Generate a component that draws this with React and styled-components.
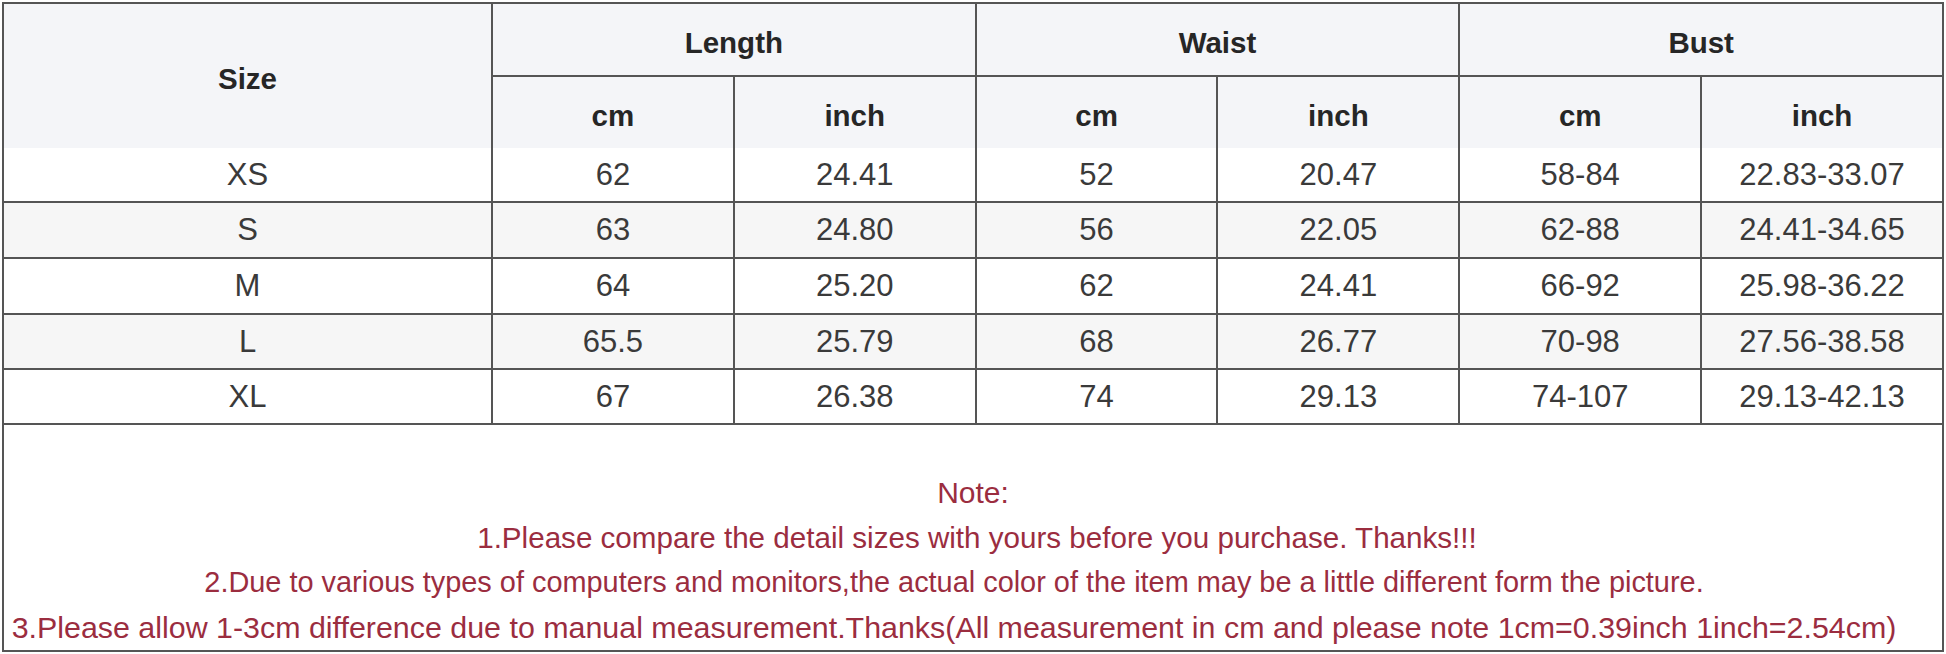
import React from "react";
import styled, { createGlobalStyle } from "styled-components";

const Global = createGlobalStyle`
  html, body { margin: 0; padding: 0; background: #ffffff; }
  body { font-family: "Liberation Sans", Arial, sans-serif; }
`;

const Page = styled.div`
  padding: 2px 2px 0 2px;
  width: 1946px;
  box-sizing: border-box;
`;

const Table = styled.table`
  width: 1942px;
  border-collapse: collapse;
  table-layout: fixed;
  border: 2px solid #555;
`;

const HeadCell = styled.th`
  background: #f4f5f8;
  color: #262626;
  font-weight: bold;
  font-size: 29.5px;
  text-align: center;
  vertical-align: middle;
  height: ${(p) => p.$h}px;
  padding: 6px 0 0 0;
  border-left: 2px solid #555;
  border-right: 2px solid #555;
  border-bottom: ${(p) => (p.$line ? "2px solid #555" : "none")};
  box-sizing: border-box;
`;

const Row = styled.tr`
  background: ${(p) => (p.$striped ? "#f6f6f6" : "#ffffff")};
`;

const Cell = styled.td`
  color: #3a3a3a;
  font-size: 31px;
  text-align: center;
  vertical-align: middle;
  height: ${(p) => p.$h}px;
  padding: 0;
  border: 2px solid #555;
  border-top: ${(p) => (p.$first ? "none" : "2px solid #555")};
  box-sizing: border-box;
`;

const NoteCell = styled.td`
  height: 227px;
  padding: 46px 0 0 0;
  border: 2px solid #555;
  vertical-align: top;
  box-sizing: border-box;
`;

const NoteLine = styled.div`
  color: #9b2d3f;
  font-size: ${(p) => p.$size}px;
  line-height: 44.5px;
  text-align: center;
  white-space: nowrap;
  padding-right: ${(p) => Math.max(0, p.$shift)}px;
  padding-left: ${(p) => Math.max(0, -p.$shift)}px;
`;

const rows = [
  ["XS", "62", "24.41", "52", "20.47", "58-84", "22.83-33.07"],
  ["S", "63", "24.80", "56", "22.05", "62-88", "24.41-34.65"],
  ["M", "64", "25.20", "62", "24.41", "66-92", "25.98-36.22"],
  ["L", "65.5", "25.79", "68", "26.77", "70-98", "27.56-38.58"],
  ["XL", "67", "26.38", "74", "29.13", "74-107", "29.13-42.13"],
];

const heights = [54, 56, 56, 55, 55];

const notes = [
  { text: "Note:", size: 30, shift: 0 },
  { text: "1.Please compare the detail sizes with yours before you purchase. Thanks!!!", size: 29.6, shift: -8 },
  { text: "2.Due to various types of computers and monitors,the actual color of the item may be a little different form the picture.", size: 28.9, shift: 38 },
  { text: "3.Please allow 1-3cm difference due to manual measurement.Thanks(All measurement in cm and please note 1cm=0.39inch 1inch=2.54cm)", size: 30.4, shift: 38 },
];

export default function App() {
  return (
    <Page>
      <Global />
      <Table>
        <colgroup>
          <col style={{ width: 489 }} />
          <col />
          <col />
          <col />
          <col />
          <col />
          <col />
        </colgroup>
        <thead>
          <tr>
            <HeadCell rowSpan={2} $h={73}>Size</HeadCell>
            <HeadCell colSpan={2} $h={73} $line>Length</HeadCell>
            <HeadCell colSpan={2} $h={73} $line>Waist</HeadCell>
            <HeadCell colSpan={2} $h={73} $line>Bust</HeadCell>
          </tr>
          <tr>
            {["cm", "inch", "cm", "inch", "cm", "inch"].map((u, i) => (
              <HeadCell key={i} $h={72}>{u}</HeadCell>
            ))}
          </tr>
        </thead>
        <tbody>
          {rows.map((r, i) => (
            <Row key={r[0]} $striped={i % 2 === 1}>
              {r.map((v, j) => (
                <Cell key={j} $h={heights[i]} $first={i === 0}>{v}</Cell>
              ))}
            </Row>
          ))}
          <tr>
            <NoteCell colSpan={7}>
              {notes.map((n) => (
                <NoteLine key={n.text} $size={n.size} $shift={n.shift}>{n.text}</NoteLine>
              ))}
            </NoteCell>
          </tr>
        </tbody>
      </Table>
    </Page>
  );
}
